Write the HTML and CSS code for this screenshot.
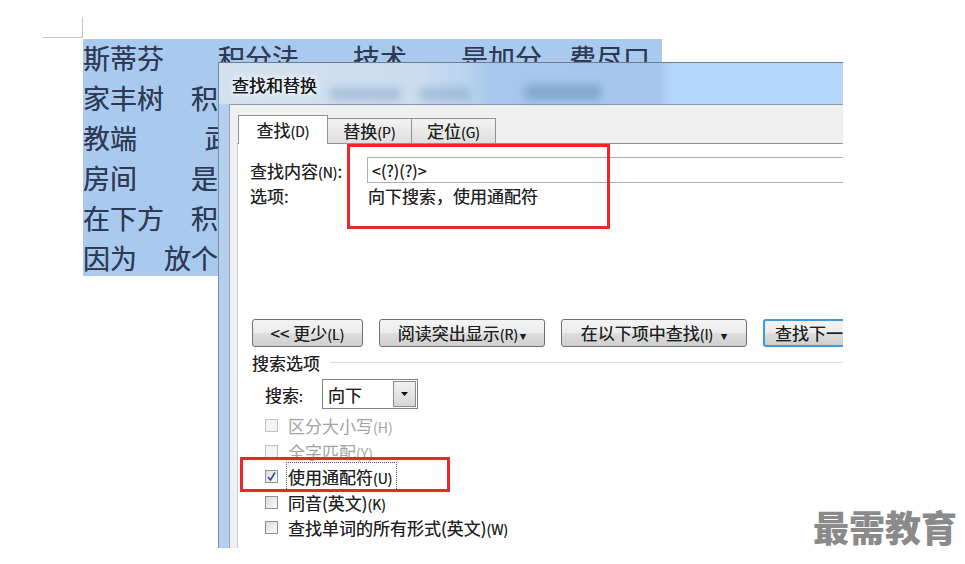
FILE: index.html
```html
<!DOCTYPE html>
<html lang="zh-CN">
<head>
  <meta charset="UTF-8" />
  <title>查找和替换</title>
  <link rel="stylesheet" href="styles.css">
</head>
<body>

  <div class="doc">
    <div class="corner"></div>
    <div class="sel">
      <p>斯蒂芬　　积分法　　技术　　是加分　费尽口</p>
      <p>家丰树　积</p>
      <p>教端　　&#8194;武</p>
      <p>房间　　是</p>
      <p>在下方　积</p>
      <p>因为　放个</p>
    </div>
  </div>

  <div class="dialog">
    <div class="titlebar">
      <span class="smudge s1"></span>
      <span class="smudge s2"></span>
      <span class="smudge s3"></span>
      <span class="title">查找和替换</span>
    </div>

    <div class="client">
      <div class="tabs">
        <div class="tab active">查找<span class="mn">(D)</span></div>
        <div class="tab">替换<span class="mn">(P)</span></div>
        <div class="tab">定位<span class="mn">(G)</span></div>
      </div>

      <div class="panel">
        <div class="find-row">
          <span class="lbl">查找内容<span class="mn">(N)</span>:</span>
          <div class="input">&lt;(?)(?)&gt;</div>
        </div>
        <div class="opt-row">
          <span class="lbl">选项:</span>
          <span class="val">向下搜索，使用通配符</span>
        </div>

        <div class="btn-row">
          <div class="btn b-less">&lt;&lt; 更少<span class="mn">(L)</span></div>
          <div class="btn b-read">阅读突出显示<span class="mn">(R)</span><span class="caret">▾</span></div>
          <div class="btn b-in">在以下项中查找<span class="mn">(I)</span><span class="caret sp">▾</span></div>
          <div class="btn b-next">查找下一处<span class="mn">(F)</span></div>
        </div>

        <div class="group-head">
          <span>搜索选项</span>
          <span class="rule"></span>
        </div>

        <div class="search-row">
          <span class="s-lbl">搜索<span class="mn">:</span></span>
          <div class="select">
            <span>向下</span>
            <span class="drop">
              <svg width="9" height="6" viewBox="0 0 9 6"><path d="M1 1h7L4.5 5z" fill="#111"/></svg>
            </span>
          </div>
        </div>

        <div class="checks">
          <div class="check off"><span class="box"></span><span>区分大小写<span class="mn">(H)</span></span></div>
          <div class="check off"><span class="box"></span><span>全字匹配<span class="mn">(Y)</span></span></div>
          <div class="check"><span class="box">
            <svg width="11" height="11" viewBox="0 0 11 11"><path d="M2 6l2.5 3L9 1.5" fill="none" stroke="#2c4f9e" stroke-width="1.6"/></svg>
          </span><span class="focus">使用通配符<span class="mn">(U)</span></span></div>
          <div class="check"><span class="box"></span><span>同音(英文)<span class="mn">(K)</span></span></div>
          <div class="check"><span class="box"></span><span>查找单词的所有形式(英文)<span class="mn">(W)</span></span></div>
        </div>
      </div>
    </div>
  </div>

  <div class="mark mark-find"></div>
  <div class="mark mark-wild"></div>

  <div class="watermark">最需教育</div>

</body>
</html>
```

FILE: styles.css
```css
* {
  box-sizing: border-box;
}

body {
  margin: 0;
  background: #fff;
  font-family: "Noto Sans CJK SC", "Noto Sans", sans-serif;
  color: #1e1e1e;
  width: 965px;
  height: 564px;
  overflow: hidden;
  position: relative;
}

/* document behind the dialog */
.doc {
  padding: 17px 0 0 43px;
}

.corner {
  width: 40px;
  height: 21px;
  border-right: 1px solid #c4c4c4;
  border-bottom: 1px solid #c4c4c4;
}

.sel {
  margin: 1px 0 0 40px;
  width: 579px;
  height: 237px;
  background: #a9caee;
  overflow: hidden;
}

.sel p {
  margin: 0;
  height: 40px;
  line-height: 40px;
  margin-top: -1px;
  margin-bottom: 1px;
  font-size: 27px;
  color: #2e3a54;
  white-space: pre;
  text-shadow: 0 0 0.6px rgba(30, 40, 60, 0.7);
}

/* dialog */
.dialog {
  position: absolute;
  left: 218px;
  top: 62px;
  width: 625px;
  height: 486px;
  border-top: 1px solid #6d7b8a;
  border-left: 1px solid #7d8d9e;
  background: #b3d1ef;
  overflow: hidden;
  text-shadow: 0 0 0.6px rgba(0, 0, 0, 0.65);
}

.titlebar {
  position: relative;
  height: 41px;
  background: linear-gradient(to right, #d4e2ef 0, #cadcef 200px, #b9d3ee 250px, #a7c8ec 270px, #a6c7eb 440px, #b4d6fb 452px, #b4d6fb 100%);
}

.title {
  position: relative;
  display: block;
  padding-left: 13px;
  line-height: 43px;
  font-size: 17px;
  color: #1a1a1a;
  text-shadow: 0 0 0.6px #000, 0 0 8px #fff, 0 0 8px #fff;
}

.smudge {
  position: absolute;
  background: #6283b0;
  filter: blur(4px);
  opacity: 0.35;
}

.s1 { left: 111px; top: 25px; width: 70px; height: 12px; }
.s2 { left: 201px; top: 25px; width: 50px; height: 12px; }
.s3 { left: 306px; top: 22px; width: 76px; height: 15px; opacity: 0.5; }

.client {
  margin-left: 10px;
  height: 445px;
  border-top: 1px solid #8b98a6;
  border-left: 1px solid #9aa6b2;
  background: #f0f0f0;
  padding: 10px 0 0 7px;
}

.mn {
  font-size: 14px;
}

/* tabs */
.tabs {
  display: flex;
  align-items: flex-end;
  margin-left: 1px;
  height: 28px;
}

.tab {
  width: 84px;
  height: 25px;
  border: 1px solid #8c9097;
  border-bottom: none;
  border-left: none;
  background: linear-gradient(#f3f3f3, #dedede);
  font-size: 17px;
  line-height: 23px;
  text-align: center;
}

.tab.active {
  position: relative;
  z-index: 1;
  width: 90px;
  height: 29px;
  margin-bottom: -1px;
  border-left: 1px solid #8c9097;
  background: #fff;
  line-height: 28px;
}

/* tab page */
.panel {
  height: 420px;
  border-top: 1px solid #8e9297;
  border-left: 1px solid #c9ccd0;
  background: #fff;
  padding: 13px 0 0 12px;
  font-size: 17px;
}

.find-row {
  display: flex;
  align-items: center;
}

.lbl {
  width: 117px;
  flex: none;
}

.input {
  flex: 1;
  height: 26px;
  border: 1px solid #abadb3;
  border-right: none;
  padding-left: 4px;
  font-size: 16px;
  line-height: 24px;
}

.opt-row {
  display: flex;
  margin-top: 3px;
  height: 20px;
  line-height: 20px;
}

.val {
  padding-left: 1px;
}

.btn-row {
  display: flex;
  gap: 16px;
  margin: 113px 0 0 2px;
}

.btn {
  height: 28px;
  border: 1px solid #707070;
  border-radius: 3px;
  background: linear-gradient(#f4f4f4 0, #ebebeb 50%, #dddddd 51%, #cfcfcf 100%);
  line-height: 26px;
  text-align: center;
  white-space: nowrap;
  flex: none;
}

.b-less { width: 111px; }
.b-read { width: 166px; }
.b-in { width: 186px; }

.b-next {
  width: 120px;
  text-align: left;
  padding-left: 10px;
  border: 2px solid #3c9be0;
  line-height: 24px;
}

.caret {
  font-size: 12px;
  margin-left: 2px;
}

.caret.sp {
  margin-left: 8px;
}

.group-head {
  display: flex;
  align-items: center;
  height: 20px;
  margin: 5px 0 0 2px;
}

.rule {
  flex: 1;
  height: 1px;
  margin-left: 10px;
  background: #d5dee4;
}

.search-row {
  display: flex;
  align-items: center;
  margin-top: 7px;
  padding-left: 15px;
}

.s-lbl {
  width: 57px;
}

.select {
  display: flex;
  align-items: center;
  width: 96px;
  height: 30px;
  border: 1px solid #7f848c;
  padding-left: 5px;
}

.select span:first-child {
  flex: 1;
}

.drop {
  display: flex;
  align-items: center;
  justify-content: center;
  width: 23px;
  height: 26px;
  margin-right: 1px;
  border: 1px solid #8a8a8a;
  background: linear-gradient(#f2f2f2, #d6d6d6);
}

.checks {
  margin-top: 4px;
}

.check {
  display: flex;
  align-items: center;
  height: 25.5px;
  padding-left: 15px;
}

.box {
  display: flex;
  align-items: center;
  justify-content: center;
  width: 13px;
  height: 13px;
  margin-right: 10px;
  border: 1px solid #8e8f8f;
  background: linear-gradient(135deg, #dcdcdc, #fbfbfb);
}

.check.off {
  color: #a3a3a3;
  text-shadow: none;
}

.check.off .box {
  border-color: #c2c2c2;
  background: #f4f4f4;
}

.focus {
  outline: 1px dotted #555;
  outline-offset: 1px;
  padding-right: 2px;
}

/* red annotation boxes */
.mark {
  position: absolute;
  border: 3px solid #ee2626;
}

.mark-find {
  left: 347px;
  top: 144px;
  width: 263px;
  height: 85px;
}

.mark-wild {
  left: 240px;
  top: 457px;
  width: 210px;
  height: 35px;
}

.watermark {
  position: absolute;
  left: 813px;
  top: 508px;
  font-size: 36px;
  line-height: 36px;
  font-weight: 900;
  color: #8a8a8a;
}
```
